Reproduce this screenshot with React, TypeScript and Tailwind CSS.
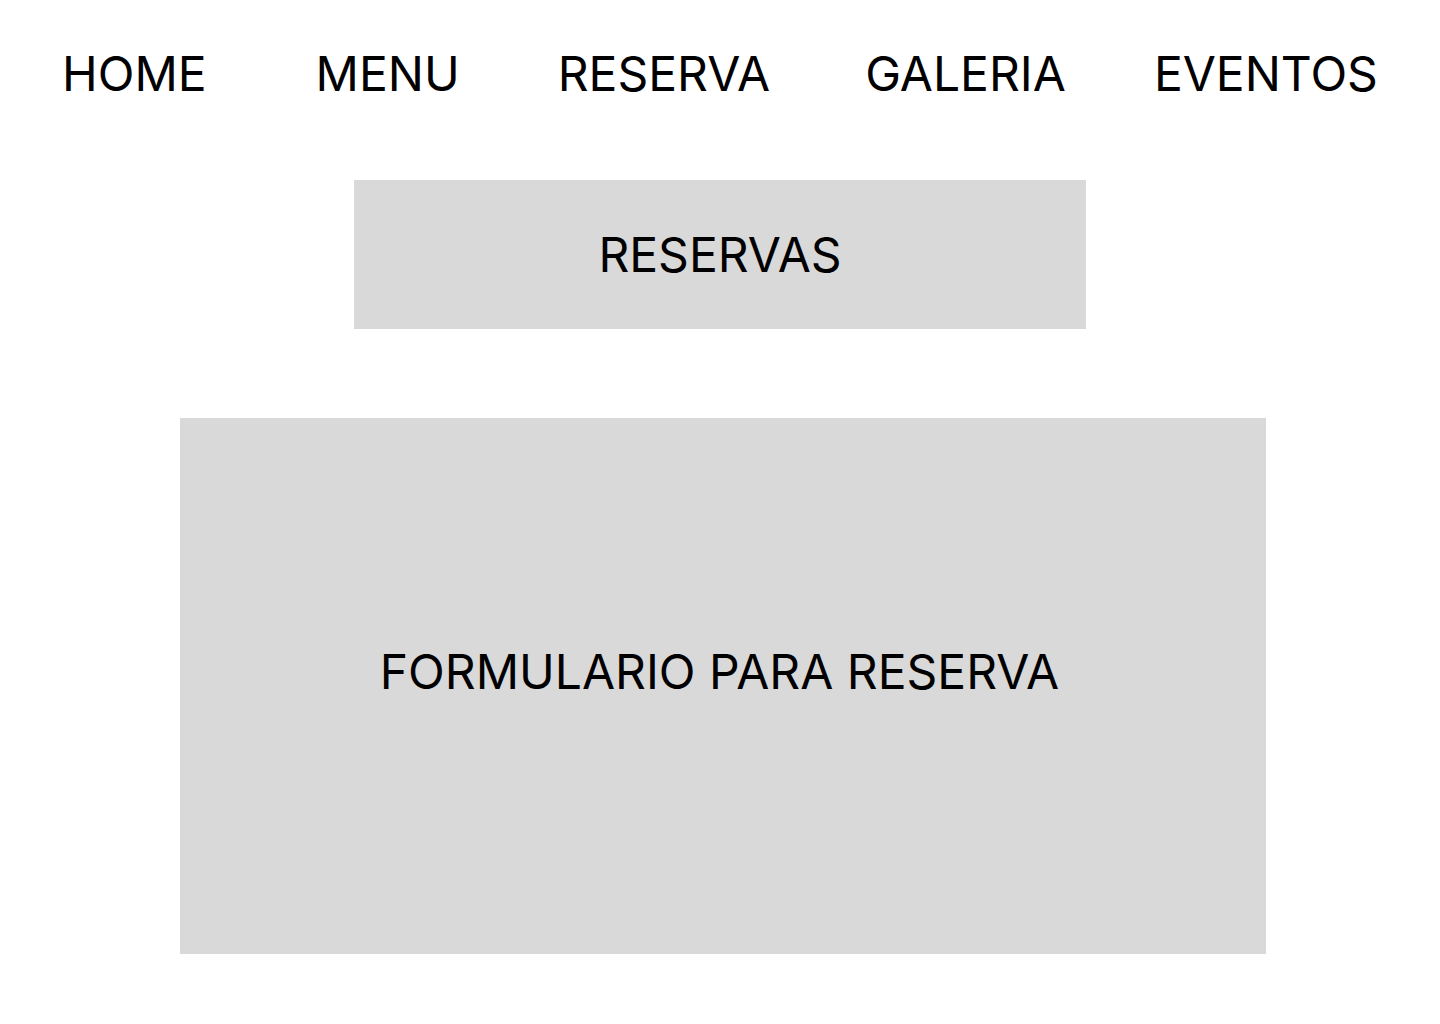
export default function App() {
  const font = { fontFamily: "Inter, 'Noto Sans', sans-serif" };
  return (
    <div className="w-[1440px] h-[1024px] bg-white text-black" style={font}>
      <nav className="flex items-start pt-[45px] pl-[62px] text-[48px] leading-[58px] font-normal">
        <span>HOME</span>
        <span className="ml-[109px]">MENU</span>
        <span className="ml-[98px]">RESERVA</span>
        <span className="ml-[95px]">GALERIA</span>
        <span className="ml-[88px]">EVENTOS</span>
      </nav>
      <div className="flex flex-col items-center">
        <div className="mt-[77px] w-[732px] h-[149px] bg-[#d9d9d9] flex items-center justify-center text-[48px] leading-[58px]">
          RESERVAS
        </div>
        <div className="mt-[89px] ml-[6px] w-[1086px] h-[536px] bg-[#d9d9d9] flex items-center justify-center pb-[28px] text-[48px] leading-[58px]">
          <span className="mr-[7px]">FORMULARIO PARA RESERVA</span>
        </div>
      </div>
    </div>
  );
}
